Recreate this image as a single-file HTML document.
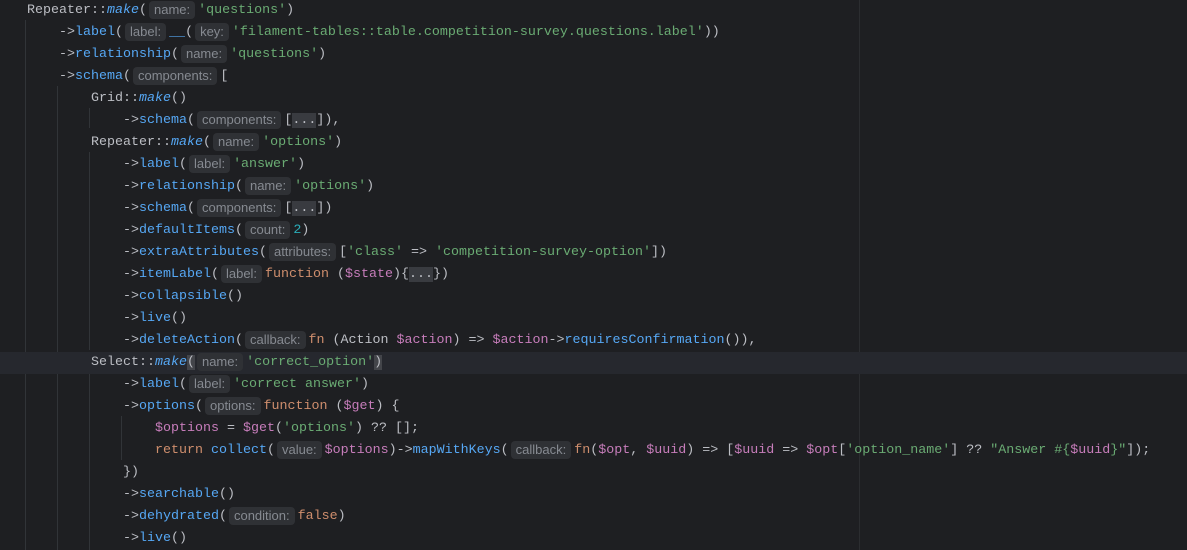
<!DOCTYPE html>
<html><head><meta charset="utf-8"><style>
html,body{margin:0;padding:0;background:#1e1f22;width:1187px;height:550px;overflow:hidden;position:relative}
.code{position:absolute;left:3px;top:0;width:1184px;font-family:"Liberation Mono","DejaVu Sans Mono",monospace;font-size:13.33px;color:#bcbec4}
.l{height:22px;line-height:22px;white-space:pre;position:relative}
.l.cur{background:#26282e;margin-left:-3px;padding-left:3px}
.m{color:#56a8f5}.i{color:#56a8f5;font-style:italic}.s{color:#6aab73}.k{color:#cf8e6d}.v{color:#c77dbb}.n{color:#2aacb8}
.h{display:inline-block;font-family:"Liberation Sans",sans-serif;font-size:13px;color:#868a91;background:#2f3135;border-radius:4px;padding:0 5px;line-height:18px;margin:0 3px 0 2px;vertical-align:middle;position:relative;top:1px}
.f{background:#393b40;color:#bcbec4}
.bm{background:#43454a}
.g{position:absolute;width:1px;background:#313438}
.mg{position:absolute;left:859px;top:0;width:1px;height:550px;background:#2b2d30}
</style></head><body>
<div class="mg"></div>
<div class="g" style="left:25px;top:20px;height:530px"></div>
<div class="g" style="left:57px;top:86px;height:464px"></div>
<div class="g" style="left:89px;top:108px;height:20px"></div>
<div class="g" style="left:89px;top:152px;height:198px"></div>
<div class="g" style="left:89px;top:372px;height:178px"></div>
<div class="g" style="left:121px;top:416px;height:44px"></div>
<div class="code">
<div class="l">   Repeater::<span class="i">make</span>(<span class="h">name:</span><span class="s">'questions'</span>)</div>
<div class="l">       -&gt;<span class="m">label</span>(<span class="h">label:</span><span class="m">__</span>(<span class="h">key:</span><span class="s">'filament-tables::table.competition-survey.questions.label'</span>))</div>
<div class="l">       -&gt;<span class="m">relationship</span>(<span class="h">name:</span><span class="s">'questions'</span>)</div>
<div class="l">       -&gt;<span class="m">schema</span>(<span class="h">components:</span>[</div>
<div class="l">           Grid::<span class="i">make</span>()</div>
<div class="l">               -&gt;<span class="m">schema</span>(<span class="h">components:</span>[<span class="f">...</span>]),</div>
<div class="l">           Repeater::<span class="i">make</span>(<span class="h">name:</span><span class="s">'options'</span>)</div>
<div class="l">               -&gt;<span class="m">label</span>(<span class="h">label:</span><span class="s">'answer'</span>)</div>
<div class="l">               -&gt;<span class="m">relationship</span>(<span class="h">name:</span><span class="s">'options'</span>)</div>
<div class="l">               -&gt;<span class="m">schema</span>(<span class="h">components:</span>[<span class="f">...</span>])</div>
<div class="l">               -&gt;<span class="m">defaultItems</span>(<span class="h">count:</span><span class="n">2</span>)</div>
<div class="l">               -&gt;<span class="m">extraAttributes</span>(<span class="h">attributes:</span>[<span class="s">'class'</span> =&gt; <span class="s">'competition-survey-option'</span>])</div>
<div class="l">               -&gt;<span class="m">itemLabel</span>(<span class="h">label:</span><span class="k">function</span> (<span class="v">$state</span>){<span class="f">...</span>})</div>
<div class="l">               -&gt;<span class="m">collapsible</span>()</div>
<div class="l">               -&gt;<span class="m">live</span>()</div>
<div class="l">               -&gt;<span class="m">deleteAction</span>(<span class="h">callback:</span><span class="k">fn</span> (Action <span class="v">$action</span>) =&gt; <span class="v">$action</span>-&gt;<span class="m">requiresConfirmation</span>()),</div>
<div class="l cur">           Select::<span class="i">make</span><span class="bm">(</span><span class="h">name:</span><span class="s">'correct_option'</span><span class="bm">)</span></div>
<div class="l">               -&gt;<span class="m">label</span>(<span class="h">label:</span><span class="s">'correct answer'</span>)</div>
<div class="l">               -&gt;<span class="m">options</span>(<span class="h">options:</span><span class="k">function</span> (<span class="v">$get</span>) {</div>
<div class="l">                   <span class="v">$options</span> = <span class="v">$get</span>(<span class="s">'options'</span>) ?? [];</div>
<div class="l">                   <span class="k">return</span> <span class="m">collect</span>(<span class="h">value:</span><span class="v">$options</span>)-&gt;<span class="m">mapWithKeys</span>(<span class="h">callback:</span><span class="k">fn</span>(<span class="v">$opt</span>, <span class="v">$uuid</span>) =&gt; [<span class="v">$uuid</span> =&gt; <span class="v">$opt</span>[<span class="s">'option_name'</span>] ?? <span class="s">"Answer #{</span><span class="v">$uuid</span><span class="s">}"</span>]);</div>
<div class="l">               })</div>
<div class="l">               -&gt;<span class="m">searchable</span>()</div>
<div class="l">               -&gt;<span class="m">dehydrated</span>(<span class="h">condition:</span><span class="k">false</span>)</div>
<div class="l">               -&gt;<span class="m">live</span>()</div>
</div>
</body></html>
